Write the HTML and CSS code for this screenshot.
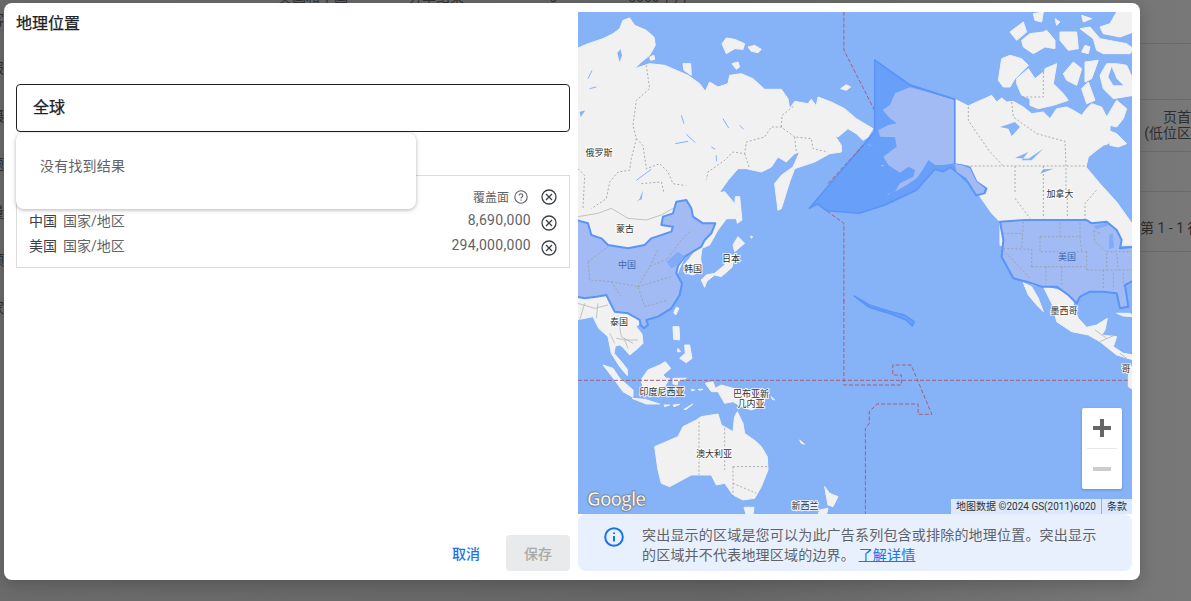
FILE: index.html
```html
<!DOCTYPE html>
<html lang="zh">
<head>
    <meta charset="utf-8">
    <title>地理位置</title>
    <link rel="stylesheet" href="styles.css">
</head>
<body>
    <!-- 背后被遮住的页面 -->
    <div class="backdrop">
        <div class="back-top"><span>美国和中国</span><span>分享结果</span><span>Google</span><span>8000个月</span></div>
        <div class="back-left">
            <span>客</span><span>报</span><span>摄</span><span>题</span><span>量</span><span>预</span><span>家</span>
        </div>
        <div class="back-right">
            <div class="back-row r1"></div>
            <div class="back-row r2"></div>
            <div class="back-row r3">页首<br>(低位区</div>
            <div class="back-row r4"></div>
            <div class="back-row r5">第 1 - 1 行</div>
        </div>
    </div>

    <div class="modal">
        <!-- 左侧 -->
        <div class="left-pane">
            <h1 class="title">地理位置</h1>
            <div class="search-box">全球</div>
            <div class="no-result">没有找到结果</div>

            <div class="loc-box">
                <div class="loc-row head-row">
                    <span class="loc-head">覆盖面</span>
                    <svg class="help-icon" viewBox="0 0 14 14">
                        <circle cx="7" cy="7" r="6.2" />
                        <path d="M5.2 5.5a1.8 1.8 0 1 1 2.8 1.5c-.7.4-1 .8-1 1.5" />
                        <path d="M7 9.6v1.2" />
                    </svg>
                    <svg class="x-icon head-x" viewBox="0 0 16 16">
                        <circle cx="8" cy="8" r="7" />
                        <path d="M5 5l6 6M11 5l-6 6" />
                    </svg>
                </div>
                <div class="loc-row">
                    <span class="loc-name">中国</span>
                    <span class="loc-type">国家/地区</span>
                    <span class="loc-num">8,690,000</span>
                    <svg class="x-icon" viewBox="0 0 16 16">
                        <circle cx="8" cy="8" r="7" />
                        <path d="M5 5l6 6M11 5l-6 6" />
                    </svg>
                </div>
                <div class="loc-row">
                    <span class="loc-name">美国</span>
                    <span class="loc-type">国家/地区</span>
                    <span class="loc-num">294,000,000</span>
                    <svg class="x-icon" viewBox="0 0 16 16">
                        <circle cx="8" cy="8" r="7" />
                        <path d="M5 5l6 6M11 5l-6 6" />
                    </svg>
                </div>
            </div>

            <div class="footer">
                <button class="btn-cancel">取消</button>
                <button class="btn-save">保存</button>
            </div>
        </div>

        <!-- 右侧地图 -->
        <div class="right-pane">
            <div class="map">
                <svg class="map-svg" viewBox="578 12 554 502" width="554" height="502">
                    <!-- 俄罗斯 -->
                    <g transform="translate(578 12) scale(.3333)">
                        <path class="land" d="M-5,110 L30,95 75,80 105,65 125,50 135,25 155,18 170,40 205,55 228,75 232,100 215,130 190,150 170,170 200,160 215,155 260,160 295,175 330,190 365,215 382,238 395,210 420,225 450,215 455,190 490,185 525,200 560,232 610,232 630,260 635,290 650,268 690,275 700,262 715,282 720,255 760,270 800,290 835,320 885,350 870,375 855,385 835,365 810,350 780,375 770,370 790,400 790,420 755,425 710,450 680,460 650,470 635,510 610,590 600,595 590,515 610,490 645,465 665,420 650,425 625,450 600,435 580,465 550,480 505,470 480,470 450,505 425,540 445,545 470,575 480,620 -5,620 Z" />
                        <path class="land" d="M432,95 L445,78 470,82 500,95 495,112 470,110 445,125 Z" />
                        <path class="land" d="M510,105 L530,100 550,112 540,122 520,118 Z" />
                        <path class="land" d="M462,155 L480,150 485,165 475,172 Z" />
                        <path class="land" d="M788,230 L805,218 818,225 805,235 Z" />
                        <path class="land" d="M315,155 L338,155 340,190 318,175 Z" />
                        <path class="land" d="M215,135 L228,130 230,142 218,145 Z" />
                        <path class="water" d="M118,122 L128,112 132,130 125,150 Z" />
                        <path class="water" d="M5,300 L22,295 8,315 Z" />
                        <path class="water" d="M150,590 L185,560 195,535 190,570 165,590 Z" />
                        <path class="river" d="M310,310 L318,335 M435,320 L452,348 M325,367 L352,392 M292,395 L330,388 M35,230 L55,225 M30,200 L42,175 M485,340 L497,352 M400,405 L412,412 M415,430 V448 M175,505 L220,472" />
                        <path class="border" d="M205,160 L215,230 175,265 165,340 175,380 160,440 155,475 120,480 95,510 85,560 40,590" />
                        <path class="border" d="M175,380 L195,400 205,470 245,455 270,480 285,515 380,530 390,480 440,445 465,420 500,425 505,390 560,375 580,345 610,345 650,375 700,380 705,410 750,420" />
                        <path class="border" d="M610,345 L612,310 650,280 M650,375 L655,420 M500,425 L515,470 M0,470 L20,490 15,590 M190,515 L250,510 260,550 230,580 M380,530 L410,570" />
                    </g>

                    <!-- 东亚 -->
                    <g transform="translate(578 180) scale(.3333)">
                        <path class="land" d="M380,0 H450 L415,40 440,35 465,70 450,110 420,150 395,195 372,205 368,235 372,268 345,285 320,278 318,255 335,235 350,215 320,230 290,300 200,400 0,400 V120 Z" />
                        <path class="land" d="M472,50 L485,50 492,120 478,130 470,85 Z" />
                        <path class="land" d="M465,195 L480,170 500,190 470,215 Z" />
                        <path class="land" d="M470,225 L462,262 430,290 410,285 385,305 370,300 385,285 410,280 440,255 455,225 Z" />
                        <path class="land" d="M370,300 L388,300 380,322 Z" />
                        <path class="land" d="M295,382 L303,385 293,405 287,398 Z" />
                        <path class="land" d="M518,168 L524,170 520,175 Z" />
                        <path class="border-solid" d="M0,110 L60,100 100,85 150,115 205,120 250,105 285,85" />
                    </g>

                    <!-- 东南亚 大洋洲 -->
                    <g transform="translate(578 310) scale(.3333)">
                        <path class="land" d="M-5,-50 H190 V35 L175,50 192,72 195,100 180,115 155,135 135,112 125,105 112,108 108,130 130,155 148,178 148,197 125,170 100,130 90,80 62,55 45,20 -5,30 Z" />
                        <path class="land" d="M75,165 L105,175 125,205 165,240 165,262 135,245 110,210 Z" />
                        <path class="land" d="M162,265 L200,268 245,282 205,282 Z" />
                        <path class="land" d="M192,205 L210,180 245,165 262,155 278,175 255,195 265,205 275,205 260,230 200,245 190,215 Z" />
                        <path class="land" d="M285,205 L325,205 300,212 298,225 285,222 Z" />
                        <path class="land" d="M258,285 L275,285 260,290 Z" />
                        <path class="land" d="M285,285 L305,283 288,290 Z" />
                        <path class="land" d="M318,298 L345,282 325,298 Z" />
                        <path class="land" d="M340,238 L350,240 342,243 Z" />
                        <path class="land" d="M360,238 L375,238 365,241 Z" />
                        <path class="land" d="M285,50 L303,50 305,90 287,88 Z" />
                        <path class="land" d="M320,105 L335,105 342,145 325,158 305,145 322,130 Z" />
                        <path class="land" d="M300,115 L308,125 298,125 Z" />
                        <path class="land" d="M382,220 L405,215 412,235 430,225 465,235 520,245 560,270 535,295 520,300 490,290 465,275 440,280 420,245 400,245 Z" />
                        <path class="land" d="M580,260 L590,270 583,268 Z" />
                        <path class="land" d="M230,410 L300,380 315,350 355,330 370,320 420,312 430,345 465,365 470,320 478,305 495,340 500,370 535,395 550,410 568,440 570,480 550,530 530,565 495,570 465,555 440,520 415,525 400,495 340,495 275,530 250,520 240,480 Z" />
                        <path class="land" d="M498,592 L528,592 525,615 505,615 Z" />
                        <path class="land" d="M740,530 L755,550 780,560 765,590 750,585 Z" />
                        <path class="land" d="M725,600 L750,595 745,615 720,615 Z" />
                        <path class="land" d="M665,390 L680,403 670,400 Z" />
                        <path class="border" d="M363,335 V495 M440,355 V480 M465,470 H570 M465,470 V560 M465,520 L535,550" />
                        <path class="border-solid" d="M95,70 L110,100 M115,85 L145,90 180,90 M140,90 L150,115" />
                    </g>

                    <!-- 中国 -->
                    <g transform="translate(578 180) scale(.3333)">
                        <path class="china" d="M-5,120 L30,130 40,165 70,175 90,195 150,205 200,195 220,175 280,155 285,140 250,135 255,110 285,100 295,65 325,60 340,85 345,110 375,130 412,130 400,160 380,180 370,200 345,215 320,230 300,258 295,280 312,310 305,345 280,385 240,410 205,420 210,435 198,445 188,435 185,420 150,400 110,395 100,375 85,345 55,350 20,355 -5,350 Z" />
                        <path class="deep" d="M265,245 L300,215 320,230 300,255 280,265 Z" />
                        <path class="border" d="M30,245 L90,200 M30,245 L35,300 100,305 130,350 M100,305 L180,320 200,380 M180,320 L215,260 270,235 M215,260 L240,210 M270,235 L310,180 340,150 M180,320 L280,290 M200,380 L270,360" />
                        <path class="border-solid" d="M0,370 L50,385 90,375 M20,370 L5,420 M60,370 L55,415 M120,410 L130,470 165,490" />
                    </g>

                    <!-- 夏威夷 日期变更线 -->
                    <g transform="translate(578 300) scale(.391 .3333)">
                        <path class="deep-line" d="M706,-12 L745,15 800,35 835,45 860,65 855,78 840,60 800,42 745,22 Z" />
                        <path class="date-line" d="M680,0 V255 H827 V225 H805 V195 H852 L905,343 H870 V312 H765 L745,335 V370 L735,385 V650" />
                        <path class="date-line" d="M0,241 H1420" />
                    </g>
                    <g transform="translate(578 0) scale(.391 .3333)">
                        <path class="date-line" d="M680,35 V150 L758,330" />
                        <path class="date-line" d="M612,612 L680,670 V905" />
                    </g>

                    <!-- 加拿大 -->
                    <g transform="translate(960 12) scale(.3333)">
                        <path class="land" d="M-15,262 L25,282 50,270 78,258 95,250 110,270 125,258 140,270 160,268 190,285 215,305 250,300 270,320 290,290 320,285 340,295 365,310 380,290 395,275 425,285 440,315 470,265 500,290 490,320 470,345 450,340 450,370 445,395 430,400 410,415 385,435 378,465 420,515 470,570 520,640 V700 H120 V629 L95,604 60,554 40,520 -15,455 Z" />
                        <path class="land" d="M445,355 L470,365 500,395 475,405 450,400 Z" />
                        <path class="land" d="M125,140 L150,130 185,140 205,160 165,200 150,225 130,225 115,205 Z" />
                        <path class="land" d="M170,200 L205,170 225,200 250,180 250,215 255,170 290,155 280,215 310,245 325,265 280,280 235,290 210,280 210,260 185,250 170,215 Z" />
                        <path class="land" d="M310,185 L340,150 365,170 350,220 320,205 Z" />
                        <path class="land" d="M375,150 L415,145 395,200 375,210 Z" />
                        <path class="land" d="M365,230 L385,210 405,265 380,275 Z" />
                        <path class="land" d="M420,190 L440,155 470,155 500,160 520,205 520,250 460,260 430,230 Z" />
                        <path class="land" d="M150,60 L190,30 200,60 170,85 Z" />
                        <path class="land" d="M185,85 L210,65 250,60 260,55 285,85 285,110 255,105 220,125 190,105 Z" />
                        <path class="land" d="M300,60 L350,60 355,110 325,115 300,85 Z" />
                        <path class="land" d="M360,50 L390,45 420,80 500,95 520,110 510,125 430,125 410,115 400,80 Z" />
                        <path class="land" d="M375,100 L390,105 385,125 365,120 Z" />
                        <path class="land" d="M420,45 L450,35 470,0 520,0 520,60 480,75 430,65 Z" />
                        <path class="land" d="M220,5 L250,0 245,30 225,25 Z" />
                        <path class="land" d="M285,20 L300,30 290,40 Z" />
                        <path class="land" d="M365,10 L395,20 370,30 Z" />
                        <path class="water" d="M455,165 L445,195 460,220 490,220 470,200 Z" />
                        <path class="water" d="M120,345 L165,330 180,345 155,372 145,350 Z" />
                        <path class="water" d="M165,438 L205,440 250,410 215,445 185,445 205,420 Z" />
                        <path class="water" d="M240,485 L280,470 250,472 Z" />
                        <path class="border" d="M25,285 V325 L55,370 90,420 130,462" />
                        <path class="border" d="M155,270 L160,315 230,365 315,388 318,462 V540" />
                        <path class="border" d="M250,180 V255 H185" />
                        <path class="border" d="M20,462 H380 M165,462 V540 M250,462 V540" />
                    </g>

                    <!-- 阿拉斯加 -->
                    <g transform="translate(800 50) scale(.3333)">
                        <path class="deep-line" d="M224,30 L330,105 464,148 V342 L485,345 510,352 530,395 560,415 555,430 528,437 505,400 480,375 452,352 430,365 405,358 350,420 255,465 178,490 80,482 52,462 28,475 224,245 Z" />
                        <path class="date-line" d="M85,400 L190,285" />
                        <path class="us-land" d="M330,112 L380,125 464,150 V340 L430,345 405,345 385,330 368,360 350,385 320,405 285,425 300,400 340,380 345,360 325,350 300,368 265,345 250,320 290,290 285,262 240,260 235,240 265,225 290,220 270,205 248,180 270,165 285,130 Z" />
                        <path class="us-land" d="M464,342 L485,345 510,355 530,395 555,415 550,428 530,432 500,385 470,365 Z" />
                        <path class="us-land" d="M205,285 L222,290 205,282 Z" />
                        <path class="us-land" d="M242,345 L254,345 246,350 Z" />
                        <path class="us-land" d="M262,432 L270,430 264,436 Z" />
                        <path class="outline" d="M224,30 L330,105 464,148 V342" />
                    </g>

                    <!-- 美国 墨西哥 -->
                    <g transform="translate(960 190) scale(.3333)">
                        <path class="land" d="M190,278 L215,290 235,325 250,365 230,345 205,315 Z" />
                        <path class="land" d="M215,282 L340,310 340,345 355,385 380,412 410,405 442,385 435,420 425,435 470,440 460,470 490,490 520,495 V510 L470,495 420,455 385,435 335,425 290,395 280,350 250,290 Z" />
                        <path class="land" d="M470,370 L510,370 520,380 490,378 Z" />
                        <path class="land" d="M510,530 L520,530 520,600 505,590 505,560 Z" />
                        <path class="border" d="M165,25 L210,85 M250,0 V85 M322,0 V85 M375,90 V40 L410,0" />
                        <path class="us-land stroke" d="M120,95 L195,90 380,90 395,100 440,95 470,120 485,150 480,175 525,170 V270 L495,285 505,350 480,355 470,310 430,305 390,305 360,320 350,340 325,315 290,290 245,290 200,275 160,265 125,200 130,150 Z" />
                        <path class="lake-us" d="M448,135 L458,130 462,172 447,178 Z" />
                        <path class="lake-us" d="M400,108 L440,98 445,106 410,118 Z" />
                        <path class="border" d="M130,130 L190,130 M130,175 L215,178 V230 M190,95 L185,175 M240,140 H300 V95 M240,140 V185 H380 M300,140 H360 V95 M360,140 L365,185 M380,185 V240 M215,230 H380 M258,230 V280 M305,230 V285 M380,240 H515 M430,240 V300 M460,250 V300 M420,130 L400,120 L405,155 L440,185 V240 M440,185 H515 M470,190 L475,240 M490,250 V290 M130,180 L210,265" />
                        <path class="border-solid" d="M405,420 L440,445 M420,455 L465,435 M480,490 L500,505" />
                    </g>

                    <g class="labels">
                        <text x="599" y="156">俄罗斯</text>
                        <text x="625" y="232">蒙古</text>
                        <text class="in-blue" x="627" y="268">中国</text>
                        <text x="693" y="272">韩国</text>
                        <text x="731" y="262">日本</text>
                        <text x="619" y="325">泰国</text>
                        <text x="662" y="395">印度尼西亚</text>
                        <text x="751" y="397">巴布亚新</text>
                        <text x="751" y="407">几内亚</text>
                        <text x="714" y="457">澳大利亚</text>
                        <text x="805" y="509">新西兰</text>
                        <text x="1060" y="197">加拿大</text>
                        <text class="in-blue" x="1067" y="260">美国</text>
                        <text x="1064" y="314">墨西哥</text>
                        <text x="1126" y="372">哥</text>
                    </g>
                </svg>

                <div class="google-logo">Google</div>
                <div class="zoom-ctrl">
                    <button class="zoom-btn"><span class="plus"></span></button>
                    <div class="zoom-sep"></div>
                    <button class="zoom-btn"><span class="minus"></span></button>
                </div>
                <div class="attribution">
                    <span>地图数据 ©2024 GS(2011)6020</span>
                    <span>条款</span>
                </div>
            </div>

            <div class="info-bar">
                <svg class="info-icon" viewBox="0 0 20 20">
                    <circle cx="10" cy="10" r="8.8" />
                    <path d="M10 9v5.5" />
                    <path d="M10 5.4v1.6" />
                </svg>
                <p class="info-text">突出显示的区域是您可以为此广告系列包含或排除的地理位置。突出显示的区域并不代表地理区域的边界。 <a href="#">了解详情</a></p>
            </div>
        </div>
    </div>
</body>
</html>
```

FILE: styles.css
```css
* {
    box-sizing: border-box;
}

body {
    margin: 0;
    height: 601px;
    overflow: hidden;
    font-family: Roboto, 'Noto Sans CJK SC', sans-serif;
    background: #6c6c6c;
}

/* 背后的页面 */
.backdrop {
    height: 601px;
    display: flex;
    justify-content: flex-end;
    color: #2e2e2e;
    font-size: 14px;
    background: linear-gradient(90deg, #6b6b6b 0%, #666 60%, #787878 100%);
}

.back-top {
    position: absolute;
    top: -14px;
    left: 278px;
    display: flex;
    gap: 60px;
    font-size: 14px;
    color: #333;
}

.back-left {
    position: absolute;
    top: 8px;
    left: -10px;
    display: flex;
    flex-direction: column;
    color: #2e2e2e;
}

.back-left span {
    height: 48px;
    line-height: 24px;
}

.back-right {
    width: 51px;
    overflow: hidden;
    white-space: nowrap;
}

.back-row {
    border-bottom: 1px solid #6a6a6a;
}

.r1 { height: 44px; }
.r2 { height: 56px; }
.r3 { height: 52px; padding-top: 9px; text-align: right; line-height: 16px; }
.r4 { height: 40px; }
.r5 { height: 60px; padding-top: 26px; line-height: 20px; }

/* 弹窗 */
.modal {
    position: absolute;
    left: 4px;
    top: 3px;
    width: 1136px;
    height: 577px;
    display: flex;
    gap: 8px;
    padding: 9px 8px 9px 12px;
    background: white;
    border-radius: 8px;
    box-shadow: 0 4px 16px rgba(0,0,0,0.2);
}

.left-pane {
    position: relative;
    width: 554px;
    display: flex;
    flex-direction: column;
}

.title {
    margin: 0;
    height: 24px;
    font-size: 16px;
    font-weight: 400;
    line-height: 24px;
    color: #202124;
    -webkit-text-stroke: 0.25px #202124;
}

.search-box {
    height: 48px;
    margin-top: 48px;
    padding-left: 16px;
    border: 1px solid #202124;
    border-radius: 4px;
    font-size: 16px;
    line-height: 46px;
    color: #202124;
    -webkit-text-stroke: 0.25px #202124;
}

.no-result {
    position: absolute;
    top: 121px;
    left: 0;
    z-index: 2;
    width: 400px;
    height: 76px;
    padding-left: 24px;
    background: white;
    border-radius: 8px;
    box-shadow: 0 1px 4px rgba(0,0,0,0.3);
    font-size: 14px;
    letter-spacing: 0.2px;
    line-height: 66px;
    color: #5f6368;
}

.loc-box {
    height: 93px;
    margin-top: 43px;
    padding: 8px 12px 0 12px;
    border: 1px solid #dadce0;
}

.loc-row {
    height: 25px;
    display: flex;
    align-items: center;
    font-size: 14px;
    color: #5f6368;
}

.head-row {
    justify-content: flex-end;
}

.loc-head {
    font-size: 12px;
}

.loc-name {
    color: #3c4043;
    margin: 0 6px 3px 0;
}

.loc-type {
    flex: 1;
    margin-bottom: 3px;
}

.loc-num {
    letter-spacing: 0.3px;
    margin: 0 10px 3px 0;
}

.help-icon {
    width: 14px;
    height: 14px;
    margin-left: 5px;
    fill: none;
    stroke: #5f6368;
    stroke-width: 1.1;
}

.x-icon {
    width: 16px;
    height: 16px;
    margin-top: 3px;
    fill: none;
    stroke: #3c4043;
    stroke-width: 1.3;
}

.x-icon.head-x {
    margin-top: 0;
    margin-left: 13px;
}

.footer {
    margin-top: auto;
    display: flex;
    align-items: center;
    justify-content: flex-end;
    gap: 26px;
}

.footer button {
    border: none;
    font-family: inherit;
    font-size: 14px;
    font-weight: 500;
}

.btn-cancel {
    padding: 0;
    background: none;
    color: #1a73e8;
}

.btn-save {
    width: 64px;
    height: 36px;
    background: #e8eaeb;
    border-radius: 4px;
    color: #a8a8a8;
}

/* 地图 */
.right-pane {
    width: 554px;
    display: flex;
    flex-direction: column;
}

.map {
    position: relative;
    height: 502px;
    background: #86b2f8;
    overflow: hidden;
}

.map-svg {
    display: block;
}

.land {
    fill: #f1f1f1;
    stroke: #f1f1f1;
    stroke-width: 1;
    stroke-linejoin: round;
    vector-effect: non-scaling-stroke;
}

.water {
    fill: #86b2f8;
}

.river {
    fill: none;
    stroke: #86b2f8;
    stroke-width: 1;
    vector-effect: non-scaling-stroke;
}

.china,
.us-land {
    fill: #a2bbf5;
    stroke-linejoin: round;
}

.china,
.stroke {
    stroke: #5a94f8;
    stroke-width: 2;
    vector-effect: non-scaling-stroke;
}

.deep,
.lake-us {
    fill: #7fabf8;
}

.deep-line {
    fill: #689ff9;
    stroke: #5a94f8;
    stroke-width: 1.5;
    stroke-linejoin: round;
    vector-effect: non-scaling-stroke;
}

.outline {
    fill: none;
    stroke: #5a94f8;
    stroke-width: 1.5;
    vector-effect: non-scaling-stroke;
}

.border {
    fill: none;
    stroke: #9a9a9a;
    stroke-width: 0.8;
    stroke-dasharray: 2 2;
    vector-effect: non-scaling-stroke;
}

.border-solid {
    fill: none;
    stroke: #b5b5b5;
    stroke-width: 0.8;
    vector-effect: non-scaling-stroke;
}

.date-line {
    fill: none;
    stroke: #a4607c;
    stroke-width: 1;
    stroke-dasharray: 4 2;
    vector-effect: non-scaling-stroke;
}

.labels text {
    font-family: 'Noto Sans CJK SC', sans-serif;
    font-size: 9px;
    text-anchor: middle;
    fill: #333;
    stroke: rgba(255,255,255,0.85);
    stroke-width: 2px;
    paint-order: stroke;
}

.labels .in-blue {
    fill: #3f68ad;
    stroke: rgba(162,187,245,0.6);
}

.google-logo {
    position: absolute;
    left: 9px;
    bottom: 3px;
    font-family: 'Open Sans', sans-serif;
    font-size: 19px;
    font-weight: 600;
    letter-spacing: -0.9px;
    line-height: 24px;
    color: white;
    -webkit-text-stroke: 0.5px #777;
    text-shadow: 0 0 2px #666;
}

.zoom-ctrl {
    position: absolute;
    right: 10px;
    top: 396px;
    width: 40px;
    height: 81px;
    background: white;
    border-radius: 2px;
    box-shadow: 0 1px 3px rgba(0,0,0,0.2);
}

.zoom-btn {
    display: flex;
    align-items: center;
    justify-content: center;
    width: 40px;
    height: 40px;
    padding: 0;
    border: none;
    background: none;
}

.zoom-sep {
    height: 1px;
    margin: 0 5px;
    background: #e6e6e6;
}

.plus {
    position: relative;
    width: 18px;
    height: 4px;
    background: #666;
}

.plus::after {
    content: "";
    position: absolute;
    left: 7px;
    top: -7px;
    width: 4px;
    height: 18px;
    background: #666;
}

.minus {
    width: 18px;
    height: 4px;
    background: #ccc;
}

.attribution {
    position: absolute;
    right: 0;
    bottom: 0;
    height: 15px;
    display: flex;
    gap: 1px;
    font-size: 10px;
    line-height: 15px;
    color: #333;
}

.attribution span {
    padding: 0 5px;
    background: rgba(255,255,255,0.7);
}

/* 提示条 */
.info-bar {
    height: 57px;
    display: flex;
    padding: 11px 30px 0 26px;
    background: #e8f0fe;
    border-radius: 8px;
}

.info-icon {
    flex: none;
    width: 20px;
    height: 20px;
    margin-top: 2px;
    margin-right: 18px;
    fill: none;
    stroke: #1a73e8;
    stroke-width: 2;
}

.info-text {
    margin: 0;
    font-size: 14px;
    line-height: 20px;
    letter-spacing: 0.2px;
    color: #5f6368;
}

.info-text a {
    color: #1a73e8;
}
```
